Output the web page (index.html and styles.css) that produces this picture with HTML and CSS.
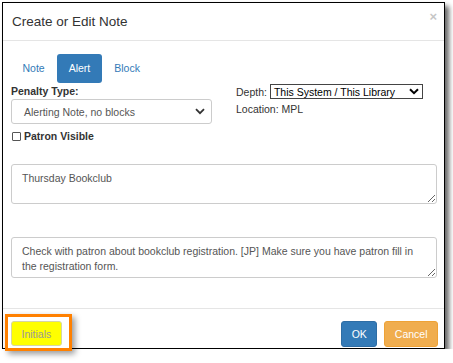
FILE: index.html
```html
<!DOCTYPE html>
<html lang="en">

<head>
    <meta charset="UTF-8" />
    <title>Create or Edit Note</title>
    <link rel="stylesheet" href="styles.css">
</head>

<body>
    <div class="note-dialog">
        <div class="note-header">
            <h4 class="note-title">Create or Edit Note</h4>
            <span class="note-close">&times;</span>
        </div>

        <div class="note-body">
            <div class="pills">
                <span class="pill">Note</span>
                <span class="pill active">Alert</span>
                <span class="pill">Block</span>
            </div>

            <div class="options">
                <div class="col-left">
                    <div class="field-label">Penalty Type:</div>
                    <div class="penalty-select">
                        <span>Alerting Note, no blocks</span>
                        <svg class="chev" width="10" height="7" viewBox="0 0 10 7">
                            <polyline points="1,1.2 5,5.2 9,1.2" fill="none" stroke="#333" stroke-width="1.8" />
                        </svg>
                    </div>
                    <div class="patron-visible">
                        <span class="checkbox"></span>
                        <span>Patron Visible</span>
                    </div>
                </div>

                <div class="col-right">
                    <div class="depth-row">
                        <span>Depth:</span>
                        <span class="depth-select">
                            <span>This System / This Library</span>
                            <svg width="10" height="7" viewBox="0 0 10 7">
                                <polyline points="1,1.2 5,5.2 9,1.2" fill="none" stroke="#000" stroke-width="2" />
                            </svg>
                        </span>
                    </div>
                    <div class="location">Location: MPL</div>
                </div>
            </div>

            <textarea class="note-text title-text" readonly>Thursday Bookclub</textarea>
            <textarea class="note-text value-text" readonly>Check with patron about bookclub registration. [JP] Make sure you have patron fill in
the registration form.</textarea>
        </div>

        <div class="note-footer">
            <button class="btn btn-initials">Initials</button>
            <div class="footer-right">
                <button class="btn btn-ok">OK</button>
                <button class="btn btn-cancel">Cancel</button>
            </div>
        </div>
    </div>

    <div class="highlight"></div>
</body>

</html>
```

FILE: styles.css
```css
body {
    margin: 0;
    padding: 0;
    background-color: #fff;
    font-family: 'Liberation Sans', Arial, sans-serif;
    font-size: 10.5px;
    color: #333;
}

.note-dialog {
    margin: 2px 0 0 2px;
    width: 441px;
    height: 345px;
    border: 1px solid #000;
    background-color: #fff;
    box-shadow: 4px 4px 5px rgba(0, 0, 0, 0.6);
    display: flex;
    flex-direction: column;
}

.note-header {
    height: 37px;
    border-bottom: 1px solid #e5e5e5;
    display: flex;
    justify-content: space-between;
    align-items: center;
    padding: 0 7px 0 9px;
}

.note-title {
    margin: 0;
    font-size: 13.5px;
    font-weight: normal;
    color: #333;
}

.note-close {
    font-size: 13px;
    font-weight: bold;
    color: #c6c6c6;
    margin-top: -10px;
}

.note-body {
    padding: 13px 6px 0 8px;
    height: 254px;
}

.pills {
    display: flex;
    gap: 1px;
}

.pill {
    height: 29px;
    line-height: 29px;
    padding: 0 11.5px;
    color: #337ab7;
    border-radius: 3px;
}

.pill.active {
    background-color: #337ab7;
    color: #fff;
}

.options {
    display: flex;
    gap: 24px;
    margin-top: 1px;
}

.col-left {
    width: 201px;
}

.field-label {
    font-weight: bold;
    line-height: 14px;
    height: 15px;
    color: #333;
}

.penalty-select {
    box-sizing: border-box;
    height: 25px;
    border: 1px solid #ccc;
    border-radius: 3px;
    display: flex;
    align-items: center;
    justify-content: space-between;
    padding: 0 6px 0 12px;
    color: #555;
}

.patron-visible {
    display: flex;
    align-items: center;
    gap: 3px;
    margin-top: 5px;
    margin-left: 1px;
    font-weight: bold;
    line-height: 14px;
}

.checkbox {
    width: 7px;
    height: 7px;
    border: 1px solid #555;
    border-radius: 1px;
}

.depth-row {
    display: flex;
    align-items: center;
    gap: 3px;
    height: 15px;
}

.depth-select {
    box-sizing: border-box;
    width: 153px;
    height: 15px;
    border: 1px solid #444;
    display: flex;
    align-items: center;
    justify-content: space-between;
    padding: 0 3px 0 3px;
    color: #000;
}

.location {
    margin-top: 3px;
    line-height: 14px;
}

.note-text {
    display: block;
    box-sizing: border-box;
    width: 426px;
    margin: 0;
    border: 1px solid #ccc;
    border-radius: 3px;
    padding: 6px 10px;
    font-family: 'Liberation Sans', Arial, sans-serif;
    font-size: 10.5px;
    line-height: 15px;
    color: #555;
    outline: none;
    resize: vertical;
}

.title-text {
    height: 40px;
    margin-top: 21px;
}

.value-text {
    height: 41px;
    margin-top: 33px;
    overflow: hidden;
}

.note-footer {
    flex: 1;
    border-top: 1px solid #e5e5e5;
    display: flex;
    justify-content: space-between;
    align-items: flex-start;
    padding: 12px 6px 0 8px;
}

.footer-right {
    display: flex;
    gap: 7px;
}

.btn {
    box-sizing: border-box;
    height: 26px;
    padding: 0 9.5px;
    border: 1px solid transparent;
    border-radius: 3px;
    font-family: 'Liberation Sans', Arial, sans-serif;
    font-size: 10.5px;
    color: #fff;
    cursor: pointer;
}

.btn-initials {
    height: 25px;
    background-color: #ffff00;
    border-color: #d6d6a0;
    color: #999;
}

.btn-ok {
    background-color: #337ab7;
    border-color: #2e6da4;
}

.btn-cancel {
    background-color: #f0ad4e;
    border-color: #eea236;
}

/* annotation box drawn over the screenshot */
.highlight {
    position: absolute;
    left: 5px;
    top: 314px;
    width: 61px;
    height: 31px;
    border: 3px solid #ff8000;
    box-shadow: 3px 3px 6px rgba(0, 0, 0, 0.4);
}
```
